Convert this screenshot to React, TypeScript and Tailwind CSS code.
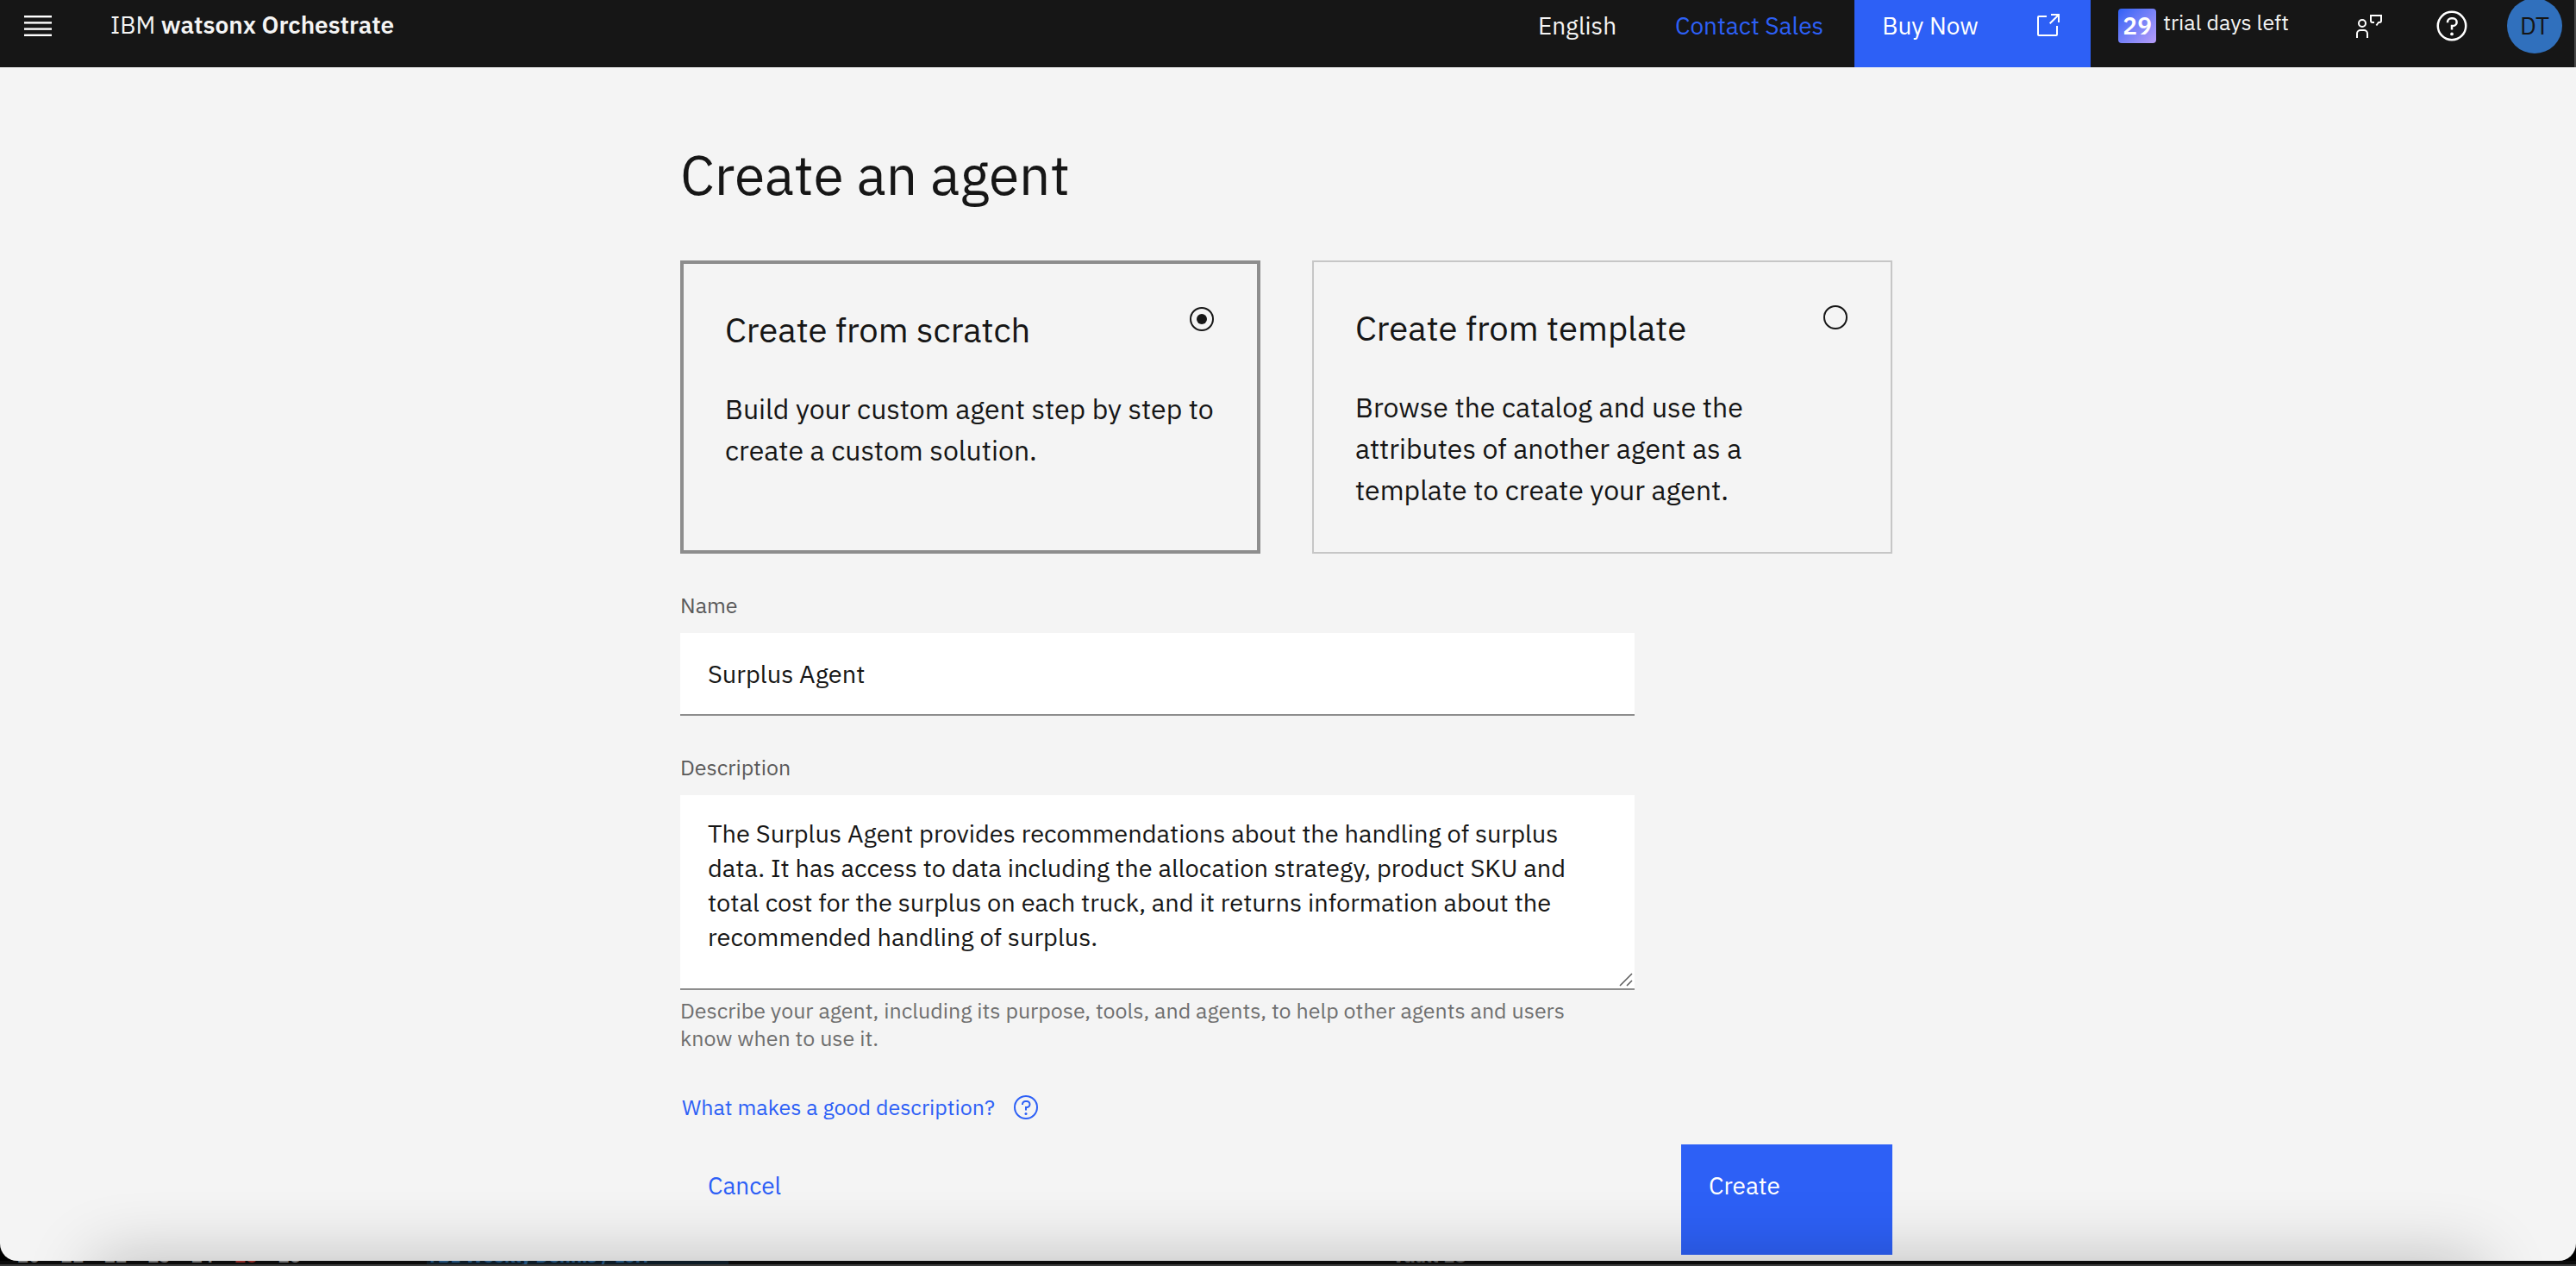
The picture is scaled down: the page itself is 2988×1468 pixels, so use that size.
import { useState } from "react";

function MenuIcon() {
  return (
    <svg viewBox="0 0 20 20" className="size-10" fill="currentColor" aria-hidden="true">
      <rect x="2" y="4" width="16" height="1.2" />
      <rect x="2" y="7.6" width="16" height="1.2" />
      <rect x="2" y="11.2" width="16" height="1.2" />
      <rect x="2" y="14.8" width="16" height="1.2" />
    </svg>
  );
}

function LaunchIcon() {
  return (
    <svg viewBox="0 0 32 32" className="size-8" fill="currentColor" aria-hidden="true">
      <path d="M26 28H6a2 2 0 0 1-2-2V6a2 2 0 0 1 2-2h9v2H6v20h20v-10h2v10a2 2 0 0 1-2 2Z" />
      <path d="M20 2v2h6.586L18 12.586 19.414 14 28 5.414V12h2V2Z" />
    </svg>
  );
}

function FeedbackIcon() {
  return (
    <svg viewBox="0 0 32 32" className="size-8" fill="none" stroke="currentColor" strokeWidth="2" aria-hidden="true">
      <circle cx="9" cy="13" r="4" />
      <path d="M3 30v-5a4 4 0 0 1 4-4h4a4 4 0 0 1 4 4v5" />
      <path d="M23 12h-2a2 2 0 0 1-2-2V4h12v6a2 2 0 0 1-2 2h-1l-2.600 3.500" />
    </svg>
  );
}

function HelpIcon({ className }: { className: string }) {
  return (
    <svg viewBox="0 0 32 32" className={className} fill="currentColor" aria-hidden="true">
      <path d="M16 2a14 14 0 1 0 14 14A14 14 0 0 0 16 2Zm0 26a12 12 0 1 1 12-12 12 12 0 0 1-12 12Z" />
      <circle cx="16" cy="23.5" r="1.5" />
      <path d="M17 8h-1.500A4.490 4.490 0 0 0 11 12.500V13h2v-.5A2.500 2.500 0 0 1 15.500 10H17a2.500 2.500 0 0 1 0 5h-2v4.500h2V17a4.500 4.500 0 0 0 0-9Z" />
    </svg>
  );
}

function Header() {
  return (
    <header className="flex h-[78px] border-r-2 border-[#4a4a4a] bg-[#161616] text-[28px] leading-9 text-[#f4f4f4]">
      <div className="flex flex-1 items-center pb-[18px] pl-6">
        <button type="button" aria-label="Open menu" className="text-white">
          <MenuIcon />
        </button>
        <a href="#" className="ml-16 pb-0.5">
          IBM <span className="font-semibold">watsonx Orchestrate</span>
        </a>
      </div>
      <div className="flex items-center pb-[18px]">
        <button type="button">English</button>
        <a href="#" className="mr-9 ml-[68px] text-[#2d60f6]">
          Contact Sales
        </a>
      </div>
      <a href="#" className="flex w-[274px] items-center justify-between bg-[#2d60f6] pr-[34px] pb-[18px] pl-8 text-white">
        Buy Now
        <LaunchIcon />
      </a>
      <div className="flex items-center pr-3.5 pb-[18px] pl-8">
        <div className="flex items-center gap-2">
          <span className="grid h-10 w-11 place-items-center rounded-sm bg-linear-135 from-[#2d60f6] to-[#b79cf8] font-semibold text-white">
            29
          </span>
          <span className="pb-2 text-[25px] leading-8">trial days left</span>
        </div>
        <button type="button" aria-label="Feedback" className="ml-[76px] text-white">
          <FeedbackIcon />
        </button>
        <button type="button" aria-label="Help" className="ml-[61px] text-white">
          <HelpIcon className="size-10" />
        </button>
        <button type="button" className="ml-11 size-16 rounded-full bg-[#3070bd] text-[#161616]">
          DT
        </button>
      </div>
    </header>
  );
}

type Mode = "scratch" | "template";

const modes: { id: Mode; title: string; text: string }[] = [
  {
    id: "scratch",
    title: "Create from scratch",
    text: "Build your custom agent step by step to create a custom solution.",
  },
  {
    id: "template",
    title: "Create from template",
    text: "Browse the catalog and use the attributes of another agent as a template to create your agent.",
  },
];

function ModeCard({
  title,
  text,
  checked,
  onSelect,
}: {
  title: string;
  text: string;
  checked: boolean;
  onSelect: () => void;
}) {
  return (
    <label className="block border-2 border-[#c6c6c6] p-12 has-checked:border-4 has-checked:border-[#8d8d8d]">
      <span className="flex items-start justify-between">
        <span className="text-[40px] leading-14">{title}</span>
        <input
          type="radio"
          name="mode"
          checked={checked}
          onChange={onSelect}
          className="m-0.5 grid size-7 appearance-none place-items-center rounded-full border-2 border-[#161616] before:size-3 before:rounded-full checked:before:bg-[#161616]"
        />
      </span>
      <span className="mt-10 block text-[32px] leading-12">{text}</span>
    </label>
  );
}

function BackgroundStrip() {
  const days = ["20", "21", "22", "23", "24", "25", "26"];
  return (
    <div aria-hidden="true" className="flex h-1.5 items-end overflow-hidden border-b-2 border-[#3a3a3a] bg-[#0b0b0b] pl-5 text-[22px] leading-5 font-bold text-[#777]">
      <div className="flex w-[475px] gap-6">
        {days.map((day) => (
          <span key={day} className={day === "25" ? "text-[#8f2c27]" : ""}>
            {day}
          </span>
        ))}
      </div>
      <span className="w-[350px] bg-[#0d1b26] text-[#23527c]">TBL Weekly Dennis / Lori</span>
      <span className="ml-[770px] text-[#555]">Vault ES</span>
    </div>
  );
}

export default function App() {
  const [mode, setMode] = useState<Mode>("scratch");
  const [name, setName] = useState("Surplus Agent");
  const [description, setDescription] = useState(
    "The Surplus Agent provides recommendations about the handling of surplus data. It has access to data including the allocation strategy, product SKU and total cost for the surplus on each truck, and it returns information about the recommended handling of surplus.",
  );

  return (
    <div className="flex min-h-screen flex-col bg-black font-['IBM_Plex_Sans',Roboto,sans-serif] text-[#161616]">
      <div className="relative flex-1 overflow-hidden rounded-b-[20px] bg-[#f4f4f4]">
        <Header />
        <main className="pt-[84px] pr-1 pb-[7px]">
          <form className="mx-auto w-full max-w-[1406px]" onSubmit={(e) => e.preventDefault()}>
            <h1 className="text-[64px] leading-20">Create an agent</h1>

            <div role="radiogroup" aria-label="How to create the agent" className="mt-[60px] grid grid-cols-2 gap-[60px]">
              {modes.map((m) => (
                <ModeCard key={m.id} title={m.title} text={m.text} checked={mode === m.id} onSelect={() => setMode(m.id)} />
              ))}
            </div>

            <div className="max-w-[1107px]">
              <label htmlFor="name" className="mt-11 block text-[25px] leading-8 text-[#5a5a5a]">
                Name
              </label>
              <input
                id="name"
                type="text"
                value={name}
                onChange={(e) => setName(e.target.value)}
                className="mt-4 block h-24 w-full border-b-2 border-[#8d8d8d] bg-white px-8 text-[29px] outline-none"
              />

              <label htmlFor="description" className="mt-11 block text-[25px] leading-8 text-[#5a5a5a]">
                Description
              </label>
              <div className="relative mt-4">
                <textarea
                  id="description"
                  rows={4}
                  value={description}
                  onChange={(e) => setDescription(e.target.value)}
                  aria-describedby="description-help"
                  className="block w-full resize-none overflow-hidden border-b-2 border-[#8d8d8d] bg-white px-8 pt-6 pb-10 text-[29px] leading-10 outline-none"
                />
                <svg viewBox="0 0 16 16" className="absolute right-0.5 bottom-1 size-4" stroke="#5a5a5a" strokeWidth="1.500" aria-hidden="true">
                  <path d="M1 15 15 1M9 15l6-6" />
                </svg>
              </div>
              <p id="description-help" className="mt-2 pr-8 text-[25px] leading-8 text-[#6f6f6f]">
                Describe your agent, including its purpose, tools, and agents, to help other agents and users know when to use it.
              </p>
              <a href="#" className="mt-12 flex items-center gap-5 pl-0.5 text-[25px] leading-8 text-[#2d60f6]">
                What makes a good description?
                <HelpIcon className="size-8" />
              </a>
            </div>

            <div className="mt-[27px] flex items-start justify-between text-[28px] leading-9">
              <button type="button" className="px-8 py-[30px] text-[#2d60f6]">
                Cancel
              </button>
              <button type="submit" className="flex h-32 w-[245px] items-start bg-[#2d60f6] px-8 py-[30px] text-white">
                Create
              </button>
            </div>
          </form>
        </main>
        <div className="pointer-events-none absolute inset-x-[110px] top-full h-40 shadow-[0_0_80px_rgba(0,0,0,0.24)]" />
      </div>
      <BackgroundStrip />
    </div>
  );
}
